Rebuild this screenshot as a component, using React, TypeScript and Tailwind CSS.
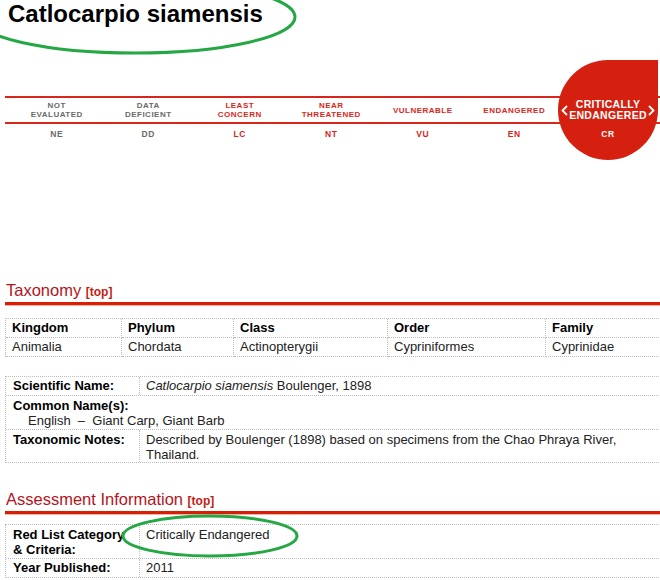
const SCALE = [
  { label: ["NOT", "EVALUATED"], code: "NE", red: false },
  { label: ["DATA", "DEFICIENT"], code: "DD", red: false },
  { label: ["LEAST", "CONCERN"], code: "LC", red: true },
  { label: ["NEAR", "THREATENED"], code: "NT", red: true },
  { label: ["VULNERABLE"], code: "VU", red: true },
  { label: ["ENDANGERED"], code: "EN", red: true },
];

const TAXONOMY = [
  { head: "Kingdom", value: "Animalia" },
  { head: "Phylum", value: "Chordata" },
  { head: "Class", value: "Actinopterygii" },
  { head: "Order", value: "Cypriniformes" },
  { head: "Family", value: "Cyprinidae" },
];

function SectionHeading({ title }: { title: string }) {
  return (
    <div>
      <h2 className="ml-[6px] h-[20px] text-[16.5px] leading-[20px] text-[#b3141b]">
        {title} <span className="text-[12px] font-bold text-[#c41a14]">[top]</span>
      </h2>
      <div className="mt-[2px] ml-[5px] h-[3px] w-[680px] bg-[#d81e05]" />
      <div className="ml-[5px] h-[1px] w-[680px] bg-[#f3b2aa]" />
    </div>
  );
}

function Chevron({ flip }: { flip?: boolean }) {
  return (
    <svg width="7" height="11" viewBox="0 0 7 11" className={flip ? "rotate-180" : ""}>
      <path d="M6 1 L1.5 5.5 L6 10" fill="none" stroke="white" strokeWidth="1.8" />
    </svg>
  );
}

function RedListScale() {
  return (
    <div className="relative mt-[32px] h-[100px] pt-[36px]">
      <div className="ml-[5px] h-[28px] w-[680px] border-y-2 border-[#d8271a] bg-white">
        <div className="ml-[6px] grid grid-cols-[repeat(7,91.5px)]">
          {SCALE.map((s) => (
            <div
              key={s.code}
              className={`flex h-[24px] flex-col items-center justify-center text-[8px] font-bold leading-[9px] tracking-[0.5px] ${
                s.red ? "text-[#d8271a]" : "text-[#6a6a6a]"
              }`}
            >
              {s.label.map((l) => (
                <span key={l}>{l}</span>
              ))}
            </div>
          ))}
        </div>
      </div>
      <div className="ml-[11px] mt-[5px] grid grid-cols-[repeat(7,91.5px)]">
        {SCALE.map((s) => (
          <div
            key={s.code}
            className={`text-center text-[8.5px] font-bold leading-[10px] tracking-[0.6px] ${
              s.red ? "text-[#d8271a]" : "text-[#6a6a6a]"
            }`}
          >
            {s.code}
          </div>
        ))}
      </div>
      <div className="absolute left-[558px] top-0 flex h-[100px] w-[100px] flex-col items-center rounded-full rounded-tr-none bg-[#d5200f] text-white">
        <div className="mt-[39px] flex w-full items-center justify-between px-[3px]">
          <Chevron />
          <div className="flex flex-col items-center text-[10.5px] font-bold leading-[11px] tracking-[0.3px]">
            <span>CRITICALLY</span>
            <span>ENDANGERED</span>
          </div>
          <Chevron flip />
        </div>
        <div className="mt-[8px] text-[8.5px] font-bold leading-[10px] tracking-[0.6px]">CR</div>
      </div>
    </div>
  );
}

export default function App() {
  return (
    <div className="relative h-[580px] w-[660px] overflow-hidden bg-white font-['Liberation_Sans',Arial,sans-serif] text-[13px] text-[#222]">
      <h1 className="ml-[8px] h-[28px] text-[24px] font-bold leading-[28px] text-black">
        Catlocarpio siamensis
      </h1>

      <RedListScale />

      <div className="mt-[120px]">
        <SectionHeading title="Taxonomy" />
      </div>

      <div className="ml-[5px] mt-[12px] grid w-[680px] grid-cols-[116px_112px_154px_158px_1fr] border-l border-t border-dotted border-[#bdbdbd]">
        {TAXONOMY.map((t) => (
          <div key={t.head} className="h-[19px] border-b border-r border-dotted border-[#bdbdbd] pl-[6px] font-bold leading-[18px] text-black">
            {t.head}
          </div>
        ))}
        {TAXONOMY.map((t) => (
          <div key={t.value} className="h-[19px] border-b border-r border-dotted border-[#bdbdbd] pl-[6px] leading-[18px]">
            {t.value}
          </div>
        ))}
      </div>

      <div className="ml-[5px] mt-[19px] w-[680px] border-l border-t border-dotted border-[#bdbdbd]">
        <div className="flex h-[19px] border-b border-dotted border-[#bdbdbd] leading-[18px]">
          <div className="w-[134px] border-r border-dotted border-[#bdbdbd] pl-[7px] font-bold text-black">Scientific Name:</div>
          <div className="pl-[6px]">
            <i>Catlocarpio siamensis</i> Boulenger, 1898
          </div>
        </div>
        <div className="h-[34px] border-b border-dotted border-[#bdbdbd] pl-[7px] pt-[2px] leading-[15px]">
          <div className="font-bold text-black">Common Name(s):</div>
          <div className="pl-[15px]">English&nbsp; –&nbsp; Giant Carp, Giant Barb</div>
        </div>
        <div className="flex h-[33px] border-b border-dotted border-[#bdbdbd] leading-[15px]">
          <div className="w-[134px] border-r border-dotted border-[#bdbdbd] pl-[7px] pt-[2px] font-bold text-black">Taxonomic Notes:</div>
          <div className="pl-[6px] pt-[2px]">
            Described by Boulenger (1898) based on specimens from the Chao Phraya River,
            <br />
            Thailand.
          </div>
        </div>
      </div>

      <div className="mt-[26px]">
        <SectionHeading title="Assessment Information" />
      </div>

      <div className="ml-[5px] mt-[9px] w-[680px] border-l border-t border-dotted border-[#bdbdbd]">
        <div className="flex h-[34px] border-b border-dotted border-[#bdbdbd] leading-[15px]">
          <div className="w-[134px] border-r border-dotted border-[#bdbdbd] pl-[7px] pt-[2px] font-bold text-black">
            Red List Category
            <br />& Criteria:
          </div>
          <div className="pl-[6px] pt-[2px]">Critically Endangered</div>
        </div>
        <div className="flex h-[19px] border-b border-dotted border-[#bdbdbd] leading-[18px]">
          <div className="w-[134px] border-r border-dotted border-[#bdbdbd] pl-[7px] font-bold text-black">Year Published:</div>
          <div className="pl-[6px]">2011</div>
        </div>
      </div>

      <svg className="pointer-events-none absolute left-0 top-0" width="660" height="580">
        <ellipse cx="135" cy="17" rx="160" ry="36" fill="none" stroke="#25a844" strokeWidth="3" />
        <ellipse cx="210" cy="536" rx="87" ry="20" fill="none" stroke="#25a844" strokeWidth="3" />
      </svg>
    </div>
  );
}
